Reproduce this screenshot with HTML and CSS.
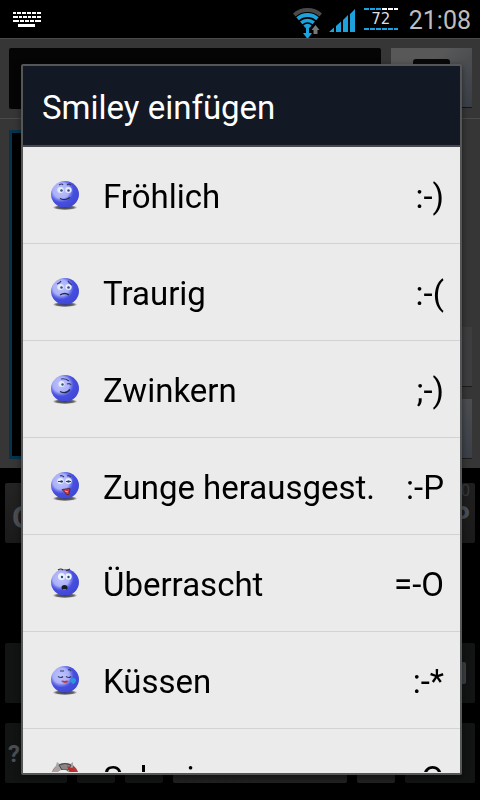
FILE: index.html
```html
<!DOCTYPE html>
<html lang="de">
<head>
<meta charset="utf-8">
<meta name="viewport" content="width=device-width, initial-scale=1">
<title>Smiley einfügen</title>
<link rel="stylesheet" href="styles.css">
</head>
<body>
<svg class="defs" aria-hidden="true">
  <defs>
    <radialGradient id="ballFill" cx="36%" cy="36%" r="66%">
      <stop offset="0" stop-color="#c0c4fc"/>
      <stop offset="0.44" stop-color="#aab0f8"/>
      <stop offset="0.56" stop-color="#7078ea"/>
      <stop offset="0.68" stop-color="#474fe0"/>
      <stop offset="1" stop-color="#4048d4"/>
    </radialGradient>
    <radialGradient id="shadeFill">
      <stop offset="0" stop-color="#333"/>
      <stop offset="0.7" stop-color="#666"/>
      <stop offset="1" stop-color="#d8d8d8"/>
    </radialGradient>
    <g id="ball">
      <ellipse cx="14" cy="26.500" rx="12" ry="2.500" fill="url(#shadeFill)"/>
      <ellipse cx="14" cy="13.300" rx="14" ry="13.300" fill="url(#ballFill)"/>
    </g>
    <g id="eyes">
      <ellipse cx="9.500" cy="9" rx="3.200" ry="3" fill="#e6ebff"/>
      <ellipse cx="17.500" cy="9" rx="3.200" ry="3" fill="#e6ebff"/>
      <circle cx="10.500" cy="9.500" r="1.300" fill="#31537c"/>
      <circle cx="17.500" cy="9.500" r="1.300" fill="#31537c"/>
    </g>
  </defs>
</svg>

<div class="screen">
  <header class="status">
    <svg class="status-keyboard" viewBox="0 0 28 15" aria-hidden="true">
      <g stroke="#fff" fill="none">
        <path stroke-width="2" d="M0 1h28" stroke-dasharray="3 1 4 1 4 1 4 1 4 1 4"/>
        <path stroke-width="2" d="M0 5h28" stroke-dasharray="5 1 3 1 4 1 3 1 4 1 4"/>
        <path stroke-width="2" d="M0 9h28" stroke-dasharray="6 1 4 1 4 1 4 1 6"/>
        <path stroke-width="3" d="M5 13.500h17"/>
      </g>
    </svg>
    <div class="status-right">
      <svg class="status-wifi" viewBox="0 0 30 32" aria-hidden="true">
        <path d="M1.300 8A20 20 0 0 1 27.700 8" fill="none" stroke="#4a4a4a" stroke-width="4"/>
        <g fill="none" stroke="#1ca3dd">
          <path d="M4.600 11.800A15 15 0 0 1 24.400 11.800" stroke-width="4"/>
          <path d="M8.200 15.900A9.500 9.500 0 0 1 20.800 15.900" stroke-width="3.500"/>
          <path d="M11.500 19.700A4.500 4.500 0 0 1 17.500 19.700" stroke-width="3.500"/>
        </g>
        <path d="M13 20h3v6h3l-4.500 6L10 26h3z" fill="#1ca3dd"/>
        <path d="M22.500 18l4 5h-2v4h-4v-4h-2z" fill="#777"/>
      </svg>
      <svg class="status-signal" viewBox="0 0 26 23" aria-hidden="true">
        <path d="M0 23L5 18.500V23zM7 23V17l5-4.500V23zM14 23V11l5-5V23zM21 23V5l5-5V23z" fill="#1ca3dd"/>
      </svg>
      <div class="battery">72</div>
      <time class="clock">21:08</time>
    </div>
  </header>

  <main class="compose">
    <div class="recipient-row">
      <input class="recipient" type="text" aria-label="Empfänger">
      <button class="contact" type="button" aria-label="Kontakt"><span class="contact-mark"></span></button>
    </div>
    <div class="message-row">
      <textarea class="message" aria-label="Nachricht"></textarea>
      <div class="message-tools">
        <button class="tool" type="button" aria-label="Anhang"></button>
        <button class="tool tool-light" type="button" aria-label="Senden"></button>
      </div>
    </div>
  </main>

  <section class="keyboard" aria-label="Tastatur">
    <div class="keys keys-edge">
      <button class="key key-left" type="button">Q</button>
      <button class="key key-right" type="button"><span class="key-hint">0</span>P</button>
    </div>
    <div class="keys keys-gap"></div>
    <div class="keys keys-edge">
      <button class="key key-wide" type="button" aria-label="Umschalt"></button>
      <button class="key key-wide key-delete" type="button" aria-label="Löschen"><span class="delete-mark"></span></button>
    </div>
    <div class="keys keys-bottom">
      <button class="key key-symbol" type="button">?</button>
      <button class="key" type="button" aria-label="Sprache"></button>
      <button class="key" type="button" aria-label="Komma"></button>
      <button class="key key-light" type="button" aria-label="Leertaste"></button>
      <button class="key key-light" type="button" aria-label="Punkt"></button>
      <button class="key" type="button" aria-label="Eingabe"></button>
    </div>
  </section>
</div>

<div class="overlay">
  <section class="dialog" role="dialog" aria-labelledby="dialog-title">
    <h1 class="dialog-title" id="dialog-title">Smiley einfügen</h1>
    <ul class="list">
      <li class="row">
        <svg class="smiley" viewBox="0 0 28 29" aria-hidden="true"><use href="#ball"/><use href="#eyes"/>
          <path d="M8 4q3-2 4 0M16 4q2-2 4 0" fill="none" stroke="#333a70" stroke-width="1.200"/>
          <path d="M9 17.500q5 2.500 10-1" fill="none" stroke="#22284f" stroke-width="1.300"/></svg>
        <span class="name">Fröhlich</span><span class="code">:-)</span>
      </li>
      <li class="row">
        <svg class="smiley" viewBox="0 0 28 29" aria-hidden="true"><use href="#ball"/><use href="#eyes"/>
          <path d="M6 6q3-1 4-3M17 3q1 2 4 4" fill="none" stroke="#333a70" stroke-width="1.200"/>
          <path d="M9 17q5-3 9 0" fill="none" stroke="#22284f" stroke-width="1.300"/></svg>
        <span class="name">Traurig</span><span class="code">:-(</span>
      </li>
      <li class="row">
        <svg class="smiley" viewBox="0 0 28 29" aria-hidden="true"><use href="#ball"/>
          <ellipse cx="10.500" cy="9" rx="3" ry="3" fill="#e6ebff"/><circle cx="11.500" cy="9.500" r="1.200" fill="#31537c"/>
          <path d="M10 4q4-1 8 2M16 9q3-1 4 1" fill="none" stroke="#333a70" stroke-width="1.200"/>
          <path d="M9 16.500q6 3 10-2" fill="none" stroke="#22284f" stroke-width="1.300"/></svg>
        <span class="name">Zwinkern</span><span class="code">;-)</span>
      </li>
      <li class="row">
        <svg class="smiley" viewBox="0 0 28 29" aria-hidden="true"><use href="#ball"/><use href="#eyes"/>
          <path d="M9 4q2-1 4 1M16 4q2-1 4 1M7 9.500h5M15 9.500h5" fill="none" stroke="#333a70" stroke-width="1.200"/>
          <path d="M11 17.500l8-1-1 6q-3 1-4-2z" fill="#c63b45" stroke="#5a2d3e" stroke-width="1"/><path d="M14 19l3 1" stroke="#e9adb5"/></svg>
        <span class="name">Zunge herausgest.</span><span class="code">:-P</span>
      </li>
      <li class="row">
        <svg class="smiley" viewBox="0 0 28 29" aria-hidden="true"><use href="#ball"/>
          <circle cx="10.500" cy="7.500" r="3.500" fill="#eef2ff"/><circle cx="17.500" cy="7.500" r="3.200" fill="#eef2ff"/>
          <circle cx="11" cy="8" r="1.200" fill="#244c70"/><circle cx="17.500" cy="8" r="1.200" fill="#244c70"/>
          <path d="M7 1q3-2 5 0M15 1.500q2 0 4-1.500" fill="none" stroke="#333" stroke-width="1.200"/>
          <ellipse cx="13.500" cy="18.500" rx="3" ry="2.500" fill="#191b25"/><path d="M12 20.500h3" stroke="#a46570"/></svg>
        <span class="name">Überrascht</span><span class="code">=-O</span>
      </li>
      <li class="row">
        <svg class="smiley" viewBox="0 0 28 29" aria-hidden="true"><use href="#ball"/>
          <path d="M9 5h4M17 4q2-1 3 1M7 10.500q3 2 5 0M15 10.500q3 2 5 0" fill="none" stroke="#333a70" stroke-width="1.200"/>
          <path d="M10 15q2-1 3.500 0 2-1 4 0-3 4-7.500 0z" fill="#bf3545"/>
          <path d="M19 14q2-2 3-2 3 0 3 3-1 3-3 3-2-1-3-4z" fill="#2897df"/></svg>
        <span class="name">Küssen</span><span class="code">:-*</span>
      </li>
      <li class="row">
        <svg class="smiley" viewBox="0 0 28 29" aria-hidden="true">
          <circle cx="14" cy="14" r="14" fill="#b03a38"/>
          <path d="M0 14A14 14 0 0 1 18 1L24 12z" fill="#aaa5a5"/>
          <path d="M4 6L6-1l4 3h8l4-3v5l-3 3H8z" fill="#a9a4a4"/>
          <path d="M8 2q6-3 12 0l-3 5h-6z" fill="#8b8686" stroke="#444" stroke-width="1"/>
          <path d="M16 3l5 2 5 6v4h-5z" fill="#bd2c28"/>
          <path d="M7 9l3-2h5l3 3z" fill="#eee"/></svg>
        <span class="name">Schreien</span><span class="code">:O</span>
      </li>
    </ul>
  </section>
</div>
</body>
</html>
```

FILE: styles.css
```css
* { box-sizing: border-box; }

body {
  margin: 0;
  background: #000;
  font-family: Roboto, "Liberation Sans", sans-serif;
  color: #000;
}

.defs { position: absolute; width: 0; height: 0; }

button, input, textarea {
  margin: 0;
  padding: 0;
  border: 0;
  border-radius: 0;
  font-family: inherit;
}

.screen {
  display: flex;
  flex-direction: column;
  height: 100vh;
  overflow: hidden;
}

/* Status bar */
.status {
  display: flex;
  justify-content: space-between;
  flex: none;
  height: 38px;
  padding: 0 9px 0 13px;
  background: #000;
}
.status-keyboard { width: 28px; height: 15px; margin-top: 12px; }
.status-right { display: flex; align-items: flex-start; }
.status-wifi { width: 30px; height: 32px; margin-top: 7px; }
.status-signal { width: 26px; height: 23px; margin: 9px 9px 0 6px; }
.battery {
  width: 34px;
  height: 22px;
  margin-top: 8px;
  background:
    repeating-linear-gradient(90deg, transparent 0 5px, #000 5px 6px),
    linear-gradient(90deg, #1ca3dd 50%, #fff 50%) top / 100% 2px no-repeat,
    linear-gradient(#1ca3dd, #1ca3dd) bottom / 100% 2px no-repeat;
  color: #ddd;
  font: 15px/22px "DejaVu Sans", sans-serif;
  text-align: center;
}
.clock {
  margin-left: 11px;
  color: #bebebe;
  font-size: 25px;
  line-height: 41px;
}

/* Message being written */
.compose {
  display: flex;
  flex-direction: column;
  flex: 1;
  border-top: 1px solid #4a4a4c;
  background: #363636;
}
.recipient-row {
  display: flex;
  gap: 10px;
  padding: 9px 8px 9px 9px;
  border-bottom: 1px solid #4a4a4a;
}
.recipient { flex: 1; min-width: 0; height: 61px; background: #050505; border-radius: 2px; }
.contact {
  width: 81px;
  height: 60px;
  background: linear-gradient(135deg, #585858 40%, #383e46);
  border-bottom: 1px solid #161616;
}
.contact-mark { display: block; width: 37px; height: 38px; margin: 0 auto; border-radius: 3px; background: #080808; }
.message-row { display: flex; flex: 1; gap: 10px; padding: 11px 8px 9px 9px; }
.message { flex: 1; min-width: 0; border: 3px solid #06344c; background: #000; resize: none; }
.message-tools { display: flex; flex-direction: column; justify-content: flex-end; gap: 12px; width: 81px; }
.tool { height: 60px; background: #3d3d3f; border-bottom: 1px solid #1c1c1c; }
.tool-light { background: linear-gradient(#4b4d50, #3b4048); }

/* Keyboard */
.keyboard {
  display: flex;
  flex-direction: column;
  flex: none;
  gap: 20px;
  padding: 15px 5px 17px;
  background: #000;
}
.keys { display: flex; height: 60px; }
.keys-edge { justify-content: space-between; }
.keys-bottom { display: grid; grid-template-columns: 62fr 38fr 38fr 174fr 38fr 70fr; gap: 10px; }
.key {
  border-radius: 2px;
  background: #121414;
  color: #4a4f55;
  font-size: 32px;
  text-align: left;
}
.key-left { width: 38px; padding: 8px 0 0 7px; background: linear-gradient(#242424, #1a1a1a); font-weight: 700; }
.key-right {
  display: flex;
  flex-direction: column;
  align-items: flex-end;
  width: 38px;
  padding: 0 5px 0 0;
  background: linear-gradient(#1f1f20, #1a1a1a);
  font-size: 28px;
  font-weight: 700;
  line-height: 36px;
}
.key-hint { color: #38383a; font-size: 16px; font-weight: 400; line-height: 16px; }
.key-wide { width: 62px; }
.key-delete { display: flex; align-items: center; justify-content: flex-end; padding-right: 9px; }
.delete-mark { width: 30px; height: 22px; background: #3c3f43; border-radius: 2px; }
.key-symbol { padding: 2px 0 0 3px; font-size: 24px; font-weight: 700; }
.key-light { background: linear-gradient(#111, #212121); }

/* Dialog */
.overlay {
  position: fixed;
  inset: 0;
  display: flex;
  padding: 64px 18px 25px 21px;
}
.dialog {
  display: flex;
  flex-direction: column;
  flex: 1;
  min-width: 0;
  border: 2px solid #555658;
  border-radius: 2px;
  background: #ebebeb;
  box-shadow: 0 2px 6px rgba(0, 0, 0, 0.5);
  overflow: hidden;
}
.dialog-title {
  flex: none;
  margin: 0;
  padding: 4px 19px 0;
  border-bottom: 2px solid #474a50;
  background: #121824;
  color: #fff;
  font-size: 33px;
  font-weight: 400;
  line-height: 75px;
}
.list {
  flex: 1;
  min-height: 0;
  margin: 0 0 1px;
  padding: 0;
  overflow: hidden;
  list-style: none;
}
.row {
  display: flex;
  align-items: center;
  height: 97px;
  padding: 0 16px 0 28px;
  border-bottom: 1px solid #d2d2d2;
  font-size: 33px;
  line-height: 40px;
  white-space: nowrap;
}
.smiley { flex: none; width: 28px; height: 29px; margin-right: 24px; overflow: visible; }
.name, .code { padding-top: 4px; }
.name { flex: 1; }
```
